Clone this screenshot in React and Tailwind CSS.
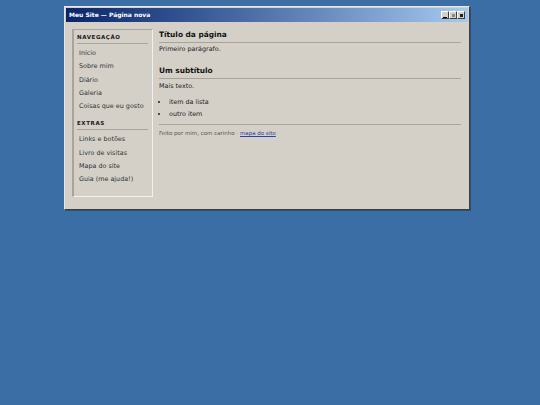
import React from "react";

const font = { fontFamily: '"DejaVu Sans", Verdana, sans-serif' };

const navItems = ["Início", "Sobre mim", "Diário", "Galeria", "Coisas que eu gosto"];
const extraItems = ["Links e botões", "Livro de visitas", "Mapa do site", "Guia (me ajuda!)"];

const TitleButton = ({ children }) => (
  <div className="w-[8px] h-[8px] bg-[#d4d0c8] border-t border-l border-t-white border-l-white border-b border-r border-b-[#404040] border-r-[#404040] flex items-center justify-center">
    {children}
  </div>
);

const SideSection = ({ title, items, last }) => (
  <div className={last ? "" : "mb-[7px]"}>
    <div className="text-[5.5px] leading-[7px] font-bold tracking-[0.6px] text-[#1a1a1a] pb-[2px] border-b border-[#a8a49c]">
      {title}
    </div>
    <ul className="pl-[2px] mt-[3px]">
      {items.map((item) => (
        <li key={item} className="text-[6.4px] text-[#333] h-[13.3px] leading-[13.3px]">
          {item}
        </li>
      ))}
    </ul>
  </div>
);

export default function App() {
  return (
    <div className="w-[540px] h-[405px] bg-[#3a6ea5] pt-[6px] pl-[64px]" style={font}>
      <div className="w-[406px] h-[204px] bg-[#d4d0c8] border border-t-[#e8e6e0] border-l-[#e8e6e0] border-r-[#404040] border-b-[#404040] shadow-[1px_1px_0_#2c4f78] p-[1px] flex flex-col">
        <div className="h-[14px] bg-gradient-to-r from-[#0a246a] to-[#a6caf0] flex items-center justify-between pl-[3px] pr-[3px]">
          <span className="text-[6px] font-bold text-white leading-none">Meu Site — Página nova</span>
          <div className="flex">
            <TitleButton>
              <div className="w-[4px] h-[1px] bg-black mt-[4px]" />
            </TitleButton>
            <TitleButton>
              <div className="w-[3px] h-[3px] bg-[#8a8a8a]" />
            </TitleButton>
            <TitleButton>
              <div className="w-[3px] h-[3px] bg-[#202020]" />
            </TitleButton>
          </div>
        </div>
        <div className="flex flex-1 pt-[7px] pl-[6px] pr-[7px] pb-[11px] gap-[6px]">
          <div className="w-[81px] shrink-0 border border-t-[#a8a49c] border-l-[#a8a49c] border-r-[#f2f0ea] border-b-[#f2f0ea] border-l-2 pt-[4px] pl-[3px] pr-[4px]">
            <SideSection title="NAVEGAÇÃO" items={navItems} />
            <SideSection title="EXTRAS" items={extraItems} last />
          </div>
          <div className="flex-1 text-[#222]">
            <h1 className="text-[7.4px] leading-[10px] font-bold text-[#111] pt-[1px] pb-[2px] border-b border-[#a8a49c]">
              Título da página
            </h1>
            <p className="text-[6.4px] leading-[9px] mt-[2px]">Primeiro parágrafo.</p>
            <h2 className="text-[7.4px] leading-[10px] font-bold text-[#111] mt-[12px] pb-[2px] border-b border-[#a8a49c]">
              Um subtítulo
            </h2>
            <p className="text-[6.4px] leading-[9px] mt-[3px]">Mais texto.</p>
            <ul className="list-disc pl-[10px] mt-[5px] text-[6.4px]">
              <li className="h-[12px] leading-[12px]">item da lista</li>
              <li className="h-[12px] leading-[12px]">outro item</li>
            </ul>
            <div className="border-t border-[#a8a49c] mt-[4px] pt-[4px] text-[5.5px] leading-[8px] text-[#555]">
              Feito por mim, com carinho ·{" "}
              <a href="#" className="text-[#2a3fa8] underline">mapa do site</a>
            </div>
          </div>
        </div>
      </div>
    </div>
  );
}
